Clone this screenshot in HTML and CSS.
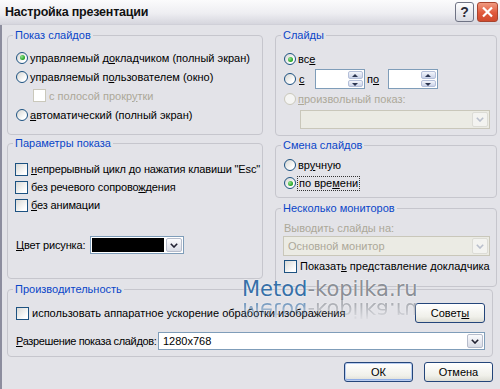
FILE: index.html
```html
<!DOCTYPE html>
<html lang="ru">

<head>
    <meta charset="UTF-8">
    <meta name="viewport" content="width=device-width, initial-scale=1.0">
    <title>Настройка презентации</title>
    <link rel="stylesheet" href="styles.css">
</head>

<body>

    <div class="window">
        <div class="titlebar">
            <span class="title">Настройка презентации</span>
            <div class="title-buttons">
                <span class="tbtn help">?</span>
                <span class="tbtn close">
                    <svg width="13" height="12" viewBox="0 0 13 12">
                        <path d="M2 1.5 L11 10.5 M11 1.5 L2 10.5" stroke="#fff" stroke-width="2.2" fill="none" />
                    </svg>
                </span>
            </div>
        </div>

        <div class="client">
            <div class="columns">
                <div class="col col-left">
                    <fieldset class="group g-show">
                        <legend>Показ слайдов</legend>
                        <div class="row"><span class="radio checked"></span><span>управляемый д<u>о</u>кладчиком (полный экран)</span></div>
                        <div class="row"><span class="radio"></span><span>управляемый п<u>о</u>льзователем (окно)</span></div>
                        <div class="row indent disabled"><span class="check"></span><span>с полосой прокр<u>у</u>тки</span></div>
                        <div class="row"><span class="radio"></span><span><u>а</u>втоматический (полный экран)</span></div>
                    </fieldset>

                    <fieldset class="group g-params">
                        <legend>Параметры показа</legend>
                        <div class="row"><span class="check"></span><span><u>н</u>епрерывный цикл до нажатия клавиши "Esc"</span></div>
                        <div class="row"><span class="check"></span><span>без речевого сопрово<u>ж</u>дения</span></div>
                        <div class="row"><span class="check"></span><span><u>б</u>ез анимации</span></div>
                        <div class="row color-row">
                            <span class="field-label color-label"><u>Ц</u>вет рисунка:</span>
                            <span class="combo color-combo">
                                <span class="swatch"></span>
                                <span class="drop">
                                    <svg width="8" height="5" viewBox="0 0 8 5"><path d="M0.8 0.8 L4 4 L7.2 0.8" stroke="#223" stroke-width="1.6" fill="none" /></svg>
                                </span>
                            </span>
                        </div>
                    </fieldset>
                </div>

                <div class="col col-right">
                    <fieldset class="group g-slides">
                        <legend>Слайды</legend>
                        <div class="row"><span class="radio checked"></span><span>вс<u>е</u></span></div>
                        <div class="row range-row">
                            <span class="radio"></span>
                            <span class="range-label"><u>с</u></span>
                            <span class="spin"><span class="spin-btns"><span class="spin-up"></span><span class="spin-down"></span></span></span>
                            <span class="range-label to">п<u>о</u></span>
                            <span class="spin"><span class="spin-btns"><span class="spin-up"></span><span class="spin-down"></span></span></span>
                        </div>
                        <div class="row disabled"><span class="radio"></span><span><u>п</u>роизвольный показ:</span></div>
                        <span class="combo wide disabled-combo custom-combo">
                            <span class="combo-text"></span>
                            <span class="drop">
                                <svg width="8" height="5" viewBox="0 0 8 5"><path d="M0.8 0.8 L4 4 L7.2 0.8" stroke="#b9bfcc" stroke-width="1.6" fill="none" /></svg>
                            </span>
                        </span>
                    </fieldset>

                    <fieldset class="group g-advance">
                        <legend>Смена слайдов</legend>
                        <div class="row"><span class="radio"></span><span>вр<u>у</u>чную</span></div>
                        <div class="row"><span class="radio checked"></span><span class="focused">по вре<u>м</u>ени</span></div>
                    </fieldset>

                    <fieldset class="group g-monitors">
                        <legend>Несколько мониторов</legend>
                        <div class="row label-row disabled"><span>Выводить слай<u>д</u>ы на:</span></div>
                        <span class="combo wide disabled-combo monitor-combo">
                            <span class="combo-text">Основной монитор</span>
                            <span class="drop">
                                <svg width="8" height="5" viewBox="0 0 8 5"><path d="M0.8 0.8 L4 4 L7.2 0.8" stroke="#b9bfcc" stroke-width="1.6" fill="none" /></svg>
                            </span>
                        </span>
                        <div class="row presenter-row"><span class="check"></span><span>Показат<u>ь</u> представление докладчика</span></div>
                    </fieldset>
                </div>
            </div>

            <fieldset class="group g-perf">
                <legend>Производительность</legend>
                <div class="row perf-row">
                    <span class="check"></span>
                    <span class="perf-text">использовать аппаратное ускорение обработки изображения</span>
                    <button class="btn tips">Совет<u>ы</u></button>
                </div>
                <div class="row res-row">
                    <span class="field-label res-label"><u>Р</u>азрешение показа слайдов:</span>
                    <span class="combo res-combo">
                        <span class="combo-text">1280x768</span>
                        <span class="drop">
                            <svg width="8" height="5" viewBox="0 0 8 5"><path d="M0.8 0.8 L4 4 L7.2 0.8" stroke="#223" stroke-width="1.6" fill="none" /></svg>
                        </span>
                    </span>
                </div>
            </fieldset>

            <div class="actions">
                <button class="btn dialog-btn default">ОК</button>
                <button class="btn dialog-btn">Отмена</button>
            </div>
        </div>

        <div class="watermark">
            <div class="wm-text"><span class="wm-blue">Metod</span>-kopilka.ru</div>
            <div class="wm-text wm-reflect"><span class="wm-blue">Metod</span>-kopilka.ru</div>
        </div>
    </div>

</body>

</html>
```

FILE: styles.css
```css
* {
    margin: 0;
    padding: 0;
    box-sizing: border-box;
}

body {
    font-family: "Liberation Sans", Arial, sans-serif;
    font-size: 11px;
    color: #000;
    background-color: #e3e3e8;
    width: 500px;
    height: 389px;
    overflow: hidden;
}

u {
    text-decoration: underline;
    text-underline-offset: 1px;
}

.window {
    position: relative;
    width: 500px;
    height: 389px;
    display: flex;
    flex-direction: column;
}

/* title bar */
.titlebar {
    height: 25px;
    display: flex;
    align-items: center;
    justify-content: space-between;
    padding: 0 2px 0 5px;
    background: linear-gradient(#fbfbfc, #eeeef2 55%, #d6d6de);
    border-bottom: 1px solid #d0d0d8;
}

.title {
    font-weight: bold;
    font-size: 12.5px;
    letter-spacing: -0.2px;
    color: #111;
}

.title-buttons {
    display: flex;
    gap: 3px;
}

.tbtn {
    display: flex;
    align-items: center;
    justify-content: center;
    height: 20px;
    border-radius: 3px;
}

.help {
    width: 19px;
    border: 1px solid #6f7384;
    background: linear-gradient(#fdfdfe, #d8dae2);
    font-size: 14px;
    font-weight: bold;
    color: #2c2c38;
}

.close {
    width: 21px;
    border: 1px solid #a8442e;
    background: linear-gradient(#f09a80, #e0593b 55%, #cf4a2d);
}

/* client area */
.client {
    flex: 1;
    border-left: 2px solid #8c8d9e;
    padding: 4px 7px 0 5px;
}

.columns {
    display: flex;
    gap: 12px;
}

.col-left {
    width: 256px;
    display: flex;
    flex-direction: column;
}

.col-right {
    flex: 1;
    display: flex;
    flex-direction: column;
}

.group {
    border: 1px solid #c6c6cd;
    border-radius: 4px;
    padding: 0 8px;
    min-width: 0;
}

.group legend {
    color: #0a46c8;
    line-height: 12px;
    padding: 0 2px;
    margin-left: -3px;
}

.g-show {
    height: 106px;
    padding-top: 7px;
}

.g-params {
    height: 142px;
    margin-top: 2px;
    padding-top: 11px;
}

.g-slides {
    height: 107px;
    padding-top: 9px;
    padding-right: 6px;
}

.g-advance {
    height: 59px;
    margin-top: 3px;
    padding-top: 5px;
}

.g-monitors {
    height: 85px;
    margin-top: 4px;
    padding-top: 7px;
    padding-right: 6px;
}

.g-perf {
    height: 74px;
    margin-top: -4px;
    padding-top: 8px;
    padding-right: 7px;
}

/* rows */
.row {
    display: flex;
    align-items: center;
    height: 18px;
    white-space: nowrap;
}

.g-show .row {
    height: 19px;
}

.g-params .row {
    letter-spacing: -0.15px;
}

.indent {
    padding-left: 17px;
}

.disabled {
    color: #aca899;
}

.radio {
    width: 12px;
    height: 12px;
    border-radius: 50%;
    border: 1px solid #1d5281;
    background: linear-gradient(135deg, #d6d6d2, #ffffff 75%);
    margin-right: 2px;
    flex-shrink: 0;
    display: flex;
    align-items: center;
    justify-content: center;
}

.radio.checked::after {
    content: "";
    width: 5px;
    height: 5px;
    border-radius: 50%;
    background: radial-gradient(circle at 35% 35%, #8fe28f, #21a121 70%);
}

.disabled .radio {
    border-color: #cac8bb;
    background: #f5f5f3;
}

.check {
    width: 13px;
    height: 13px;
    border: 1px solid #1d5281;
    background: linear-gradient(135deg, #d9d9d6, #ffffff 80%);
    margin-right: 3px;
    flex-shrink: 0;
}

.g-params .check {
    margin-left: -1px;
}

.disabled .check {
    border-color: #cac8bb;
    background: #fff;
}

.focused {
    outline: 1px dotted #333;
    padding: 0 1px;
    line-height: 13px;
}

/* combos and fields */
.field-label {
    flex-shrink: 0;
}

.combo {
    display: flex;
    align-items: center;
    border: 1px solid #7f9db9;
    background: #fff;
    padding: 1px;
}

.combo-text {
    flex: 1;
    padding-left: 3px;
}

.drop {
    width: 16px;
    height: 100%;
    display: flex;
    align-items: center;
    justify-content: center;
    border: 1px solid #b6bccb;
    border-radius: 2px;
    background: linear-gradient(#fbfbfd, #d9dce6);
}

.color-row {
    margin-top: 22px;
}

.color-label {
    width: 74px;
}

.color-combo {
    width: 94px;
    height: 18px;
}

.swatch {
    flex: 1;
    height: 100%;
    background: #000;
    margin-right: 2px;
}

.range-row {
    height: 20px;
    margin-top: 1px;
}

.range-label {
    width: 17px;
    padding-left: 1px;
}

.range-label.to {
    width: 23px;
    padding-left: 2px;
}

.spin {
    width: 50px;
    height: 20px;
    border: 1px solid #7f9db9;
    background: #fff;
    display: flex;
    justify-content: flex-end;
    padding: 1px;
}

.spin-btns {
    width: 15px;
    display: flex;
    flex-direction: column;
    gap: 1px;
}

.spin-up,
.spin-down {
    flex: 1;
    border: 1px solid #b4bfd9;
    border-radius: 2px;
    background: linear-gradient(#f4f6fb, #c9d2e8);
    position: relative;
}

.spin-up::after,
.spin-down::after {
    content: "";
    position: absolute;
    left: 3px;
    top: 2px;
    border-left: 3px solid transparent;
    border-right: 3px solid transparent;
}

.spin-up::after {
    border-bottom: 3px solid #2b3550;
}

.spin-down::after {
    border-top: 3px solid #2b3550;
}

.g-slides .row.disabled {
    margin-top: 1px;
}

.wide {
    height: 19px;
}

.custom-combo {
    margin-top: 2px;
    margin-left: 16px;
}

.disabled-combo {
    background: #ebebe4;
    border-color: #c9c7ba;
    color: #aca899;
}

.disabled-combo .drop {
    border-color: #dcdcd6;
    background: #f3f3f0;
}

.label-row {
    height: 14px;
}

.monitor-combo {
    height: 20px;
    margin-top: 1px;
    margin-left: -1px;
}

.presenter-row {
    height: 16px;
    margin-top: 2px;
}

.perf-row {
    height: 20px;
}

.perf-text {
    flex: 1;
}

.res-row {
    margin-top: 9px;
}

.res-label {
    width: 142px;
    letter-spacing: -0.35px;
}

.res-combo {
    flex: 1;
    height: 18px;
}

/* buttons */
.btn {
    font-family: "Liberation Sans", Arial, sans-serif;
    font-size: 11px;
    color: #000;
    height: 20px;
    border: 1px solid #23457a;
    border-radius: 3px;
    background: linear-gradient(#ffffff, #f0f0ea 70%, #dcdcd4);
    cursor: pointer;
}

.tips {
    width: 70px;
}

.actions {
    display: flex;
    justify-content: flex-end;
    gap: 11px;
    margin-top: 5px;
}

.dialog-btn {
    width: 69px;
}

.dialog-btn.default {
    box-shadow: inset 0 0 0 1px #b9cdf0, inset 0 -1px 0 1px #90aee6;
}

/* site watermark over the picture */
.watermark {
    position: absolute;
    left: 242px;
    top: 278px;
    pointer-events: none;
}

.wm-text {
    font-family: "DejaVu Sans", sans-serif;
    font-size: 21px;
    line-height: 22px;
    color: #8b8f96;
    text-shadow: 0 0 2px #fff;
}

.wm-blue {
    color: #3670a8;
}

.wm-reflect {
    transform: scaleY(-1);
    opacity: 0.6;
    margin-top: -1px;
    -webkit-mask-image: linear-gradient(to top, #000 25%, transparent 100%);
    mask-image: linear-gradient(to top, #000 25%, transparent 100%);
}
```
